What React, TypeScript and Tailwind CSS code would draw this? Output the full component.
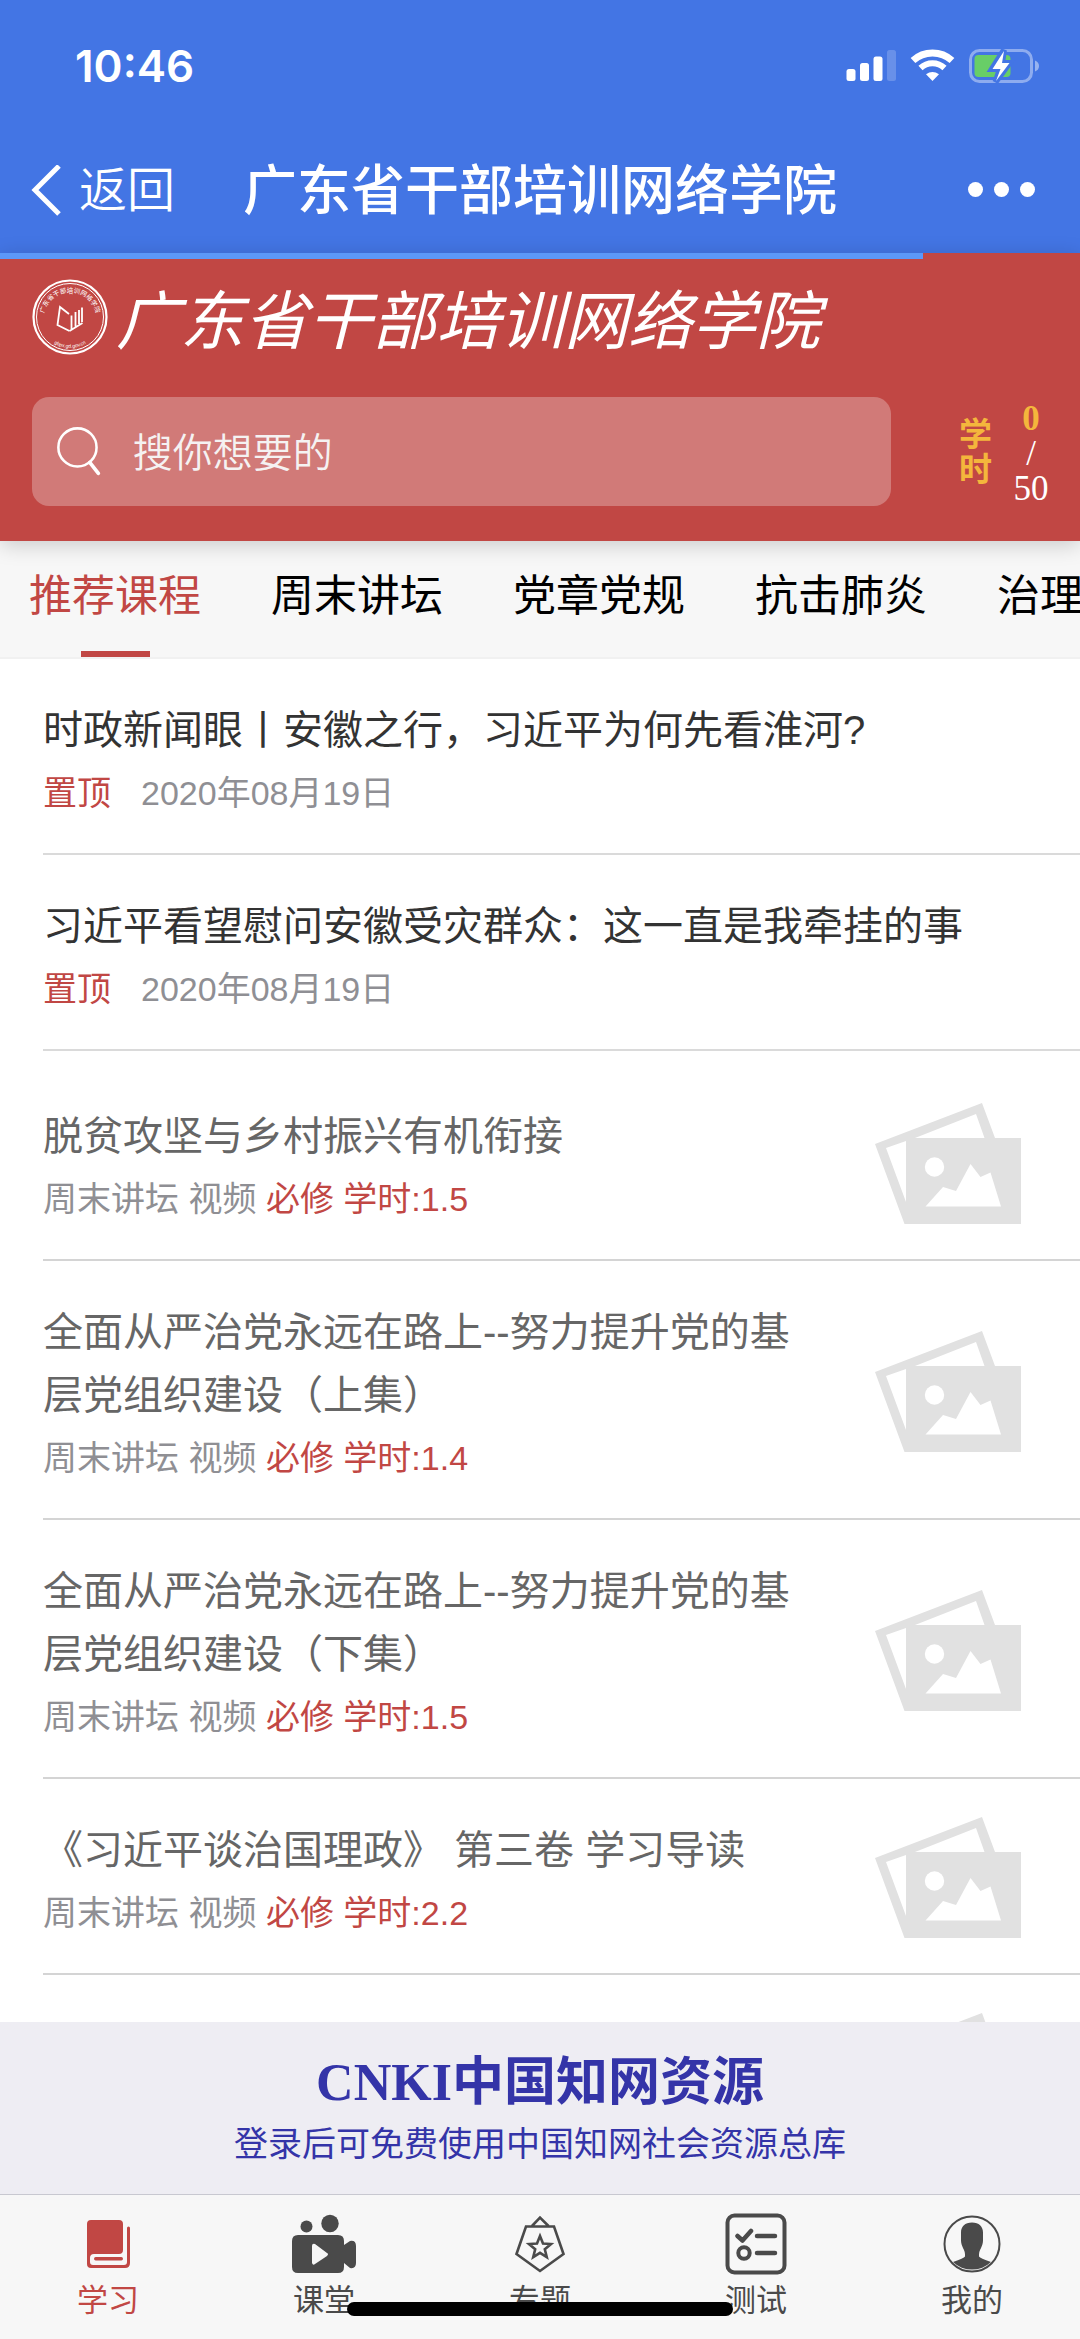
import { ReactNode } from "react"

const tabs = ["推荐课程", "周末讲坛", "党章党规", "抗击肺炎", "治理"]

const news = [
  { title: "时政新闻眼丨安徽之行，习近平为何先看淮河?", date: "2020年08月19日" },
  { title: "习近平看望慰问安徽受灾群众：这一直是我牵挂的事", date: "2020年08月19日" },
]

const courses = [
  { title: "脱贫攻坚与乡村振兴有机衔接", hours: "1.5" },
  { title: "全面从严治党永远在路上--努力提升党的基层党组织建设（上集）", hours: "1.4" },
  { title: "全面从严治党永远在路上--努力提升党的基层党组织建设（下集）", hours: "1.5" },
  { title: "《习近平谈治国理政》 第三卷 学习导读", hours: "2.2" },
  { title: "", hours: "" },
]

const StatusBar = () => (
  <div className="flex h-[132px] items-center justify-between pl-[75px] pr-[40px]">
    <span className="font-[Inter] text-[44px] font-semibold leading-none">10:46</span>
    <svg width="194" height="34" viewBox="0 0 194 34" fill="#fff" aria-hidden="true">
      <rect x="0.5" y="20" width="9" height="12" rx="2.5" />
      <rect x="14" y="14" width="9" height="18" rx="2.5" />
      <rect x="27.5" y="7.5" width="9" height="24.5" rx="2.5" />
      <rect x="41" y="1" width="9" height="31" rx="2.5" opacity=".2" />
      <g fill="none" stroke="#fff">
        <path d="M67 11.5a29 29 0 0 1 39 0" strokeWidth="7" />
        <path d="M74.500 19a17.500 17.500 0 0 1 24 0" strokeWidth="6" />
      </g>
      <path d="M86.500 32l-6.500-6.700q6.500-4.600 13 0z" />
      <rect x="124.5" y="1.5" width="61" height="31" rx="9" fill="none" stroke="#fff" strokeWidth="3" opacity=".4" />
      <path d="M189 11.500q4 1.500 4 5.500t-4 5.500z" opacity=".45" />
      <rect x="128.500" y="6" width="36" height="22" rx="4" fill="#68ce67" />
      <path d="M158 1l-12 19h8l-4.500 13 14-19h-7.500z" stroke="#4375e4" strokeWidth="6" />
      <path d="M158 2l-11.500 18h8l-4.500 12 13.500-18h-7.500z" />
    </svg>
  </div>
)

const TitleBar = () => (
  <div className="grid h-[121px] grid-cols-[1fr_auto_1fr] items-start px-[31px]">
    <a href="#back" className="flex h-[118px] items-center gap-[18px] text-[48px] font-[350]">
      <svg width="30" height="52" viewBox="0 0 30 52" fill="none" stroke="#fff" strokeWidth="5" aria-hidden="true">
        <path d="M28 1L4 25l24 24" />
      </svg>
      返回
    </a>
    <h1 className="text-[54px] font-medium leading-[119px]">广东省干部培训网络学院</h1>
    <button aria-label="更多" className="mr-[14px] flex h-[114px] items-center gap-[11px] justify-self-end">
      <span className="size-[15px] rounded-full bg-white" />
      <span className="size-[15px] rounded-full bg-white" />
      <span className="size-[15px] rounded-full bg-white" />
    </button>
  </div>
)

const Emblem = () => (
  <svg width="76" height="76" viewBox="0 0 76 76" fill="none" stroke="#fff" className="shrink-0" aria-hidden="true">
    <circle cx="38" cy="38" r="36.5" strokeWidth="2.2" />
    <circle cx="38" cy="38" r="33.5" strokeWidth="1" />
    <path d="M37.500 52l-12-6 2.500-18 9 7" strokeWidth="1.800" />
    <path d="M39.500 50V36.500M43.500 47.500V33M47 45V31M50 43V28.500M37.500 52l13-8" strokeWidth="1.800" />
    <path id="emblem-top" d="M11.500 40a26.500 26.500 0 0 1 53 0" stroke="none" />
    <path id="emblem-bottom" d="M14 58a32 32 0 0 0 48 0" stroke="none" />
    <g fill="#fff" stroke="none">
      <text fontSize="6.5">
        <textPath href="#emblem-top" startOffset="50%" textAnchor="middle">广东省干部培训网络学院</textPath>
      </text>
      <text fontSize="5">
        <textPath href="#emblem-bottom" startOffset="50%" textAnchor="middle">gbpx.gd.gov.cn</textPath>
      </text>
    </g>
  </svg>
)

const Header = () => (
  <section className="relative z-10 h-[288px] shrink-0 bg-[#c14744] pl-8 pr-[31px] text-white shadow-[0_4px_20px_rgba(0,0,0,0.18)]">
    <div className="absolute left-0 top-0 h-[6px] w-[85.5%] bg-[#5c98f8]" />
    <div className="flex h-[144px] items-center gap-[8px] pb-[16px]">
      <Emblem />
      <p className="whitespace-nowrap pt-[10px] text-[64px] italic leading-none">广东省干部培训网络学院</p>
    </div>
    <div className="flex items-center">
      <label className="flex h-[109px] flex-1 items-center gap-[32px] rounded-[17px] bg-[#d17a78] pl-[25px]">
        <svg width="48" height="54" viewBox="0 0 48 54" fill="none" stroke="#fff" strokeWidth="2.8" strokeLinecap="round" aria-hidden="true">
          <circle cx="22.5" cy="22" r="21" />
          <path d="M36 38.500l9.500 12" strokeWidth="4" />
        </svg>
        <input
          type="search"
          aria-label="搜索"
          placeholder="搜你想要的"
          className="w-full bg-transparent pt-[2px] text-[40px] font-[350] outline-none placeholder:text-[#f5f2f2] placeholder:opacity-100"
        />
      </label>
      <div className="ml-[68px] w-[34px] text-[33px] font-bold leading-[35px] text-[#f4b63c]">学时</div>
      <div className="ml-[20px] w-[36px] pt-[4px] text-center font-['Liberation_Serif'] text-[35px] leading-[35px]">
        <div className="font-bold text-[#f4b63c]">0</div>
        <div>/</div>
        <div>50</div>
      </div>
    </div>
  </section>
)

const CategoryTabs = () => (
  <nav className="flex h-[118px] shrink-0 gap-[70px] overflow-hidden border-b-2 border-[#f1f1f1] bg-[#f7f7f7] pl-[29px]">
    {tabs.map((tab, i) => (
      <a
        key={tab}
        href="#tab"
        className={
          i === 0
            ? "flex shrink-0 flex-col items-center justify-between text-[43px] leading-[110px] text-[#c14744]"
            : "shrink-0 text-[43px] leading-[110px] text-black"
        }
      >
        {tab}
        {i === 0 && <span className="h-[6px] w-[69px] bg-[#c14744]" />}
      </a>
    ))}
  </nav>
)

const PhotoPlaceholder = () => (
  <svg width="146" height="126" viewBox="0 0 146 126" fill="#e1e1e1" className="shrink-0" aria-hidden="true">
    <path
      fillRule="evenodd"
      d="M0 45L107 4l13 35h26v86H29.500zM11 49l20 54V42zM40 39h69.500L101 15z"
    />
    <circle cx="59.5" cy="68" r="9.7" fill="#fff" />
    <path d="M50.500 107.500L68 88l13 4 14.500-27 10 13 10-4.500 10.500 34z" fill="#fff" />
  </svg>
)

const CourseList = () => (
  <main className="min-h-0 flex-1 overflow-hidden bg-white">
    <ul className="pl-[43px]">
      {news.map((item) => (
        <li key={item.title} className="border-b-2 border-[#dadada] pb-[29px] pt-[40px]">
          <h2 className="text-[40px] leading-[63px] text-[#333]">{item.title}</h2>
          <p className="flex gap-[30px] text-[34px] leading-[62px] text-[#8f8f94]">
            <span className="text-[#c14744]">置顶</span>
            <time>{item.date}</time>
          </p>
        </li>
      ))}
    </ul>
    <ul className="pl-[43px] pt-[14px]">
      {courses.map((course, i) => (
        <li key={i} className="flex min-h-[196px] items-center gap-[56px] border-b-2 border-[#d4d4d4] pr-[59px]">
          <div className="flex-1 pb-[29px] pt-[40px]">
            <h2 className="text-[40px] leading-[63px] text-[#666]">{course.title}</h2>
            {course.hours && (
              <p className="text-[34px] leading-[62px] text-[#8f8f94]">
                周末讲坛 视频 <span className="text-[#c14744]">必修 学时:{course.hours}</span>
              </p>
            )}
          </div>
          <PhotoPlaceholder />
        </li>
      ))}
    </ul>
  </main>
)

const BookIcon = () => (
  <svg width="44" height="50" viewBox="0 0 44 50" fill="currentColor" aria-hidden="true">
    <path d="M5 1h28q4 0 4 4v26q0 4-4 4H8q-4 0-4 4v4q0 3 3 3h31q3 0 3-3V9a1.500 1.500 0 0 1 3 0v35q0 5-5 5H5q-4 0-4-4V5q0-4 4-4z" />
    <rect x="8" y="38" width="29" height="3.5" rx="1.7" />
  </svg>
)

const CameraIcon = () => (
  <svg width="64" height="60" viewBox="0 0 64 60" fill="currentColor" aria-hidden="true">
    <circle cx="14.5" cy="12.5" r="6" />
    <circle cx="38" cy="9.5" r="8.7" />
    <path
      fillRule="evenodd"
      d="M6 21h40q6 0 6 6v4l6-4q6-1 6 5v17q0 6-6 5l-6-5v4q0 6-6 6H6q-6 0-6-6V27q0-6 6-6zm14 11v17q1 3 3 1l12-8q2-2 0-3l-12-9q-3-1-3 2z"
    />
  </svg>
)

const TopicIcon = () => (
  <svg width="50" height="58" viewBox="0 0 50 58" fill="none" stroke="currentColor" strokeWidth="2.6" aria-hidden="true">
    <path d="M11 11.500h28l9.500 27.500L25 56 1.500 39zM17 11l8-8.500 8.500 8.500" />
    <path d="M25 21l3 7.500 8 .5-6.200 5.200 2 8-6.800-4.300-6.800 4.300 2-8L14 29l8-.5z" />
  </svg>
)

const TestIcon = () => (
  <svg width="62" height="62" viewBox="0 0 62 62" fill="none" stroke="currentColor" strokeWidth="4" strokeLinecap="round" strokeLinejoin="round" aria-hidden="true">
    <rect x="2.5" y="2.5" width="57" height="57" rx="7" />
    <path d="M12.500 23l5 4.500L26 18M32 23h18M32 40h18" strokeWidth="4.500" />
    <circle cx="19" cy="40" r="5.7" />
  </svg>
)

const UserIcon = () => (
  <svg width="58" height="58" viewBox="0 0 58 58" fill="currentColor" aria-hidden="true">
    <circle cx="29" cy="29" r="27.5" fill="none" stroke="currentColor" strokeWidth="2" />
    <path d="M29 7.500c7 0 11 4 11 10v8c0 6-4 9-4 14v2q1 1.500 12 5.500a27.500 27.500 0 0 1-38 0q11-4 12-5.500v-2c0-5-4-8-4-14v-8c0-6 4-10 11-10z" />
  </svg>
)

const bottomItems: { name: string; icon: ReactNode }[] = [
  { name: "学习", icon: <BookIcon /> },
  { name: "课堂", icon: <CameraIcon /> },
  { name: "专题", icon: <TopicIcon /> },
  { name: "测试", icon: <TestIcon /> },
  { name: "我的", icon: <UserIcon /> },
]

const BottomBar = () => (
  <nav className="relative grid h-[145px] shrink-0 grid-cols-5 border-t border-[#c8c8d0] bg-[#f7f7f7]">
    {bottomItems.map((item, i) => (
      <a
        key={item.name}
        href="#nav"
        className={
          i === 0
            ? "flex flex-col items-center pt-4 text-[31px] leading-[48px] text-[#c14744]"
            : "flex flex-col items-center pt-4 text-[31px] leading-[48px] text-[#4a4a4a]"
        }
      >
        <span className="flex h-[66px] items-center">{item.icon}</span>
        {item.name}
      </a>
    ))}
    {/* home indicator */}
    <div className="absolute bottom-[23px] left-1/2 h-[14px] w-[386px] -translate-x-1/2 rounded-full bg-black" />
  </nav>
)

export default function App() {
  return (
    <div className="flex h-screen flex-col overflow-hidden font-['Liberation_Sans','Noto_Sans_CJK_SC',sans-serif]">
      <header className="shrink-0 bg-[#4375e4] text-white">
        <StatusBar />
        <TitleBar />
      </header>
      <Header />
      <CategoryTabs />
      <CourseList />
      <a href="#cnki" className="h-[172px] shrink-0 bg-[#eeedf3] pt-[28px] text-center text-[#3434a8]">
        <div className="font-['Liberation_Serif','Noto_Sans_CJK_SC',serif] text-[52px] font-bold leading-[66px]">CNKI中国知网资源</div>
        <div className="text-[34px] leading-[56px]">登录后可免费使用中国知网社会资源总库</div>
      </a>
      <BottomBar />
    </div>
  )
}
